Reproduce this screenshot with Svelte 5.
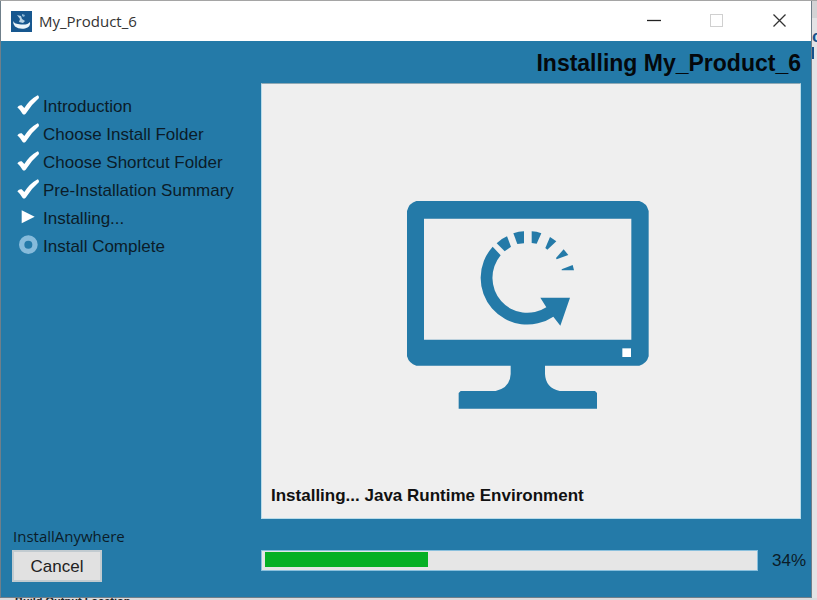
<script>
	export let product = 'My_Product_6';
	export let progress = 34;
	export let task = 'Java Runtime Environment';

	const steps = [
		{ label: 'Introduction', state: 'done' },
		{ label: 'Choose Install Folder', state: 'done' },
		{ label: 'Choose Shortcut Folder', state: 'done' },
		{ label: 'Pre-Installation Summary', state: 'done' },
		{ label: 'Installing...', state: 'current' },
		{ label: 'Install Complete', state: 'pending' }
	];
</script>

<div class="desktop">
	<div class="behind-top"></div>
	<div class="installer">
		<header class="titlebar">
			<svg class="app-icon" viewBox="0 0 21 21" aria-hidden="true">
				<rect width="21" height="21" fill="#17578f" />
				<path d="M2 10Q3 13 10 13.500Q17 14 19 11Q20 16 14 17.500Q8 18.500 4 15.500Q2 13 2 10z" fill="#eaf4fa" />
				<path d="M6 4L10 5L11 8L14 10L12 12L8 11L9 8z" fill="#b9d4e6" />
				<path d="M11 3L14 4L13 6L11 5z" fill="#8db6d3" />
			</svg>
			<span class="window-title">{product}</span>
			<div class="window-buttons">
				<button aria-label="Minimize">
					<svg viewBox="0 0 14 14"><path d="M0 6.500h14" stroke="#222" stroke-width="1.300" /></svg>
				</button>
				<button aria-label="Maximize" disabled>
					<svg viewBox="0 0 14 14"><rect x="0.500" y="0.500" width="12" height="12" fill="none" stroke="#d0d0d0" /></svg>
				</button>
				<button aria-label="Close">
					<svg viewBox="0 0 14 14"><path d="M0.500 0.500l12 12M12.500 0.500l-12 12" stroke="#333" stroke-width="1.300" /></svg>
				</button>
			</div>
		</header>

		<main class="body">
			<h1>Installing {product}</h1>

			<ol class="steps">
				{#each steps as step}
					<li>
						<svg viewBox="0 0 66 60" aria-hidden="true">
							{#if step.state === 'done'}
								<path d="M1 37Q7 29 14 31L22 39Q38 14 62 1Q66 2 66 9Q43 29 26 56Q21 61 17 57Q11 46 1 37z" fill="#fff" />
							{:else if step.state === 'current'}
								<path d="M14 10L53 29L14 49z" fill="#fff" />
							{:else}
								<circle cx="34" cy="29" r="20" fill="none" stroke="#86bbdb" stroke-width="16" />
							{/if}
						</svg>
						<span>{step.label}</span>
					</li>
				{/each}
			</ol>

			<section class="panel">
				<svg class="monitor" viewBox="52 33 726 624" aria-hidden="true">
					<path
						fill-rule="evenodd"
						d="M80 33H749Q771 39 777 63V499Q771 521 749 527H466V552Q468 594 510 603H616L622 609V656H207V609L213 603H318Q361 594 363 552V527H80Q58 521 52 499V63Q58 39 80 33zM103 86V449H725V86z"
					/>
					<path d="M698 475h26v26h-26z" fill="#fff" />
					<path d="M309 170A140 140 0 0 0 491 380L512 407L541 323H452L470 352A105 105 0 0 1 333 196z" />
					<path d="M321 160Q335 146 352 139L364 170L345 184z" />
					<path d="M371 130Q387 124 403 124V160L383 162z" />
					<path d="M426 124Q441 124 455 130L441 161L426 159z" />
					<path d="M481 141L500 154L473 179L467 174z" />
					<path d="M522 178L536 195L501 208L499 204z" />
					<path d="M549 225L553 241H516V238z" />
				</svg>
				<p class="status">Installing... {task}</p>
			</section>

			<footer class="actions">
				<span class="brand">InstallAnywhere</span>
				<button class="cancel">Cancel</button>
			</footer>

			<div class="progress">
				<div
					class="track"
					role="progressbar"
					aria-label="Installation progress"
					aria-valuenow={progress}
					aria-valuemin="0"
					aria-valuemax="100"
				>
					<div class="fill" style="width: {progress}%"></div>
				</div>
				<span class="percent">{progress}%</span>
			</div>
		</main>
	</div>
	<div class="behind-right">
		<span>c</span>
	</div>
	<div class="behind-bottom">
		<span>Build Output Location</span>
	</div>
</div>

<style>
	:global(body) {
		margin: 0;
	}

	.desktop {
		display: grid;
		grid-template-columns: 1fr 5px;
		grid-template-rows: 1px 1fr 2px;
		min-height: 100vh;
		background: #dcdbdd;
		font-family: 'Liberation Sans', Arial, sans-serif;
		font-size: 17px;
		color: #0b1c28;
	}

	.behind-top {
		grid-column: 1 / -1;
		background: #a5a5a5;
	}

	.installer {
		box-sizing: border-box;
		display: flex;
		flex-direction: column;
		border: 1px solid #6f7f8a;
		border-top: none;
		background: #247aa8;
	}

	.titlebar {
		display: flex;
		align-items: center;
		height: 40px;
		padding-left: 10px;
		background: #fff;
	}

	.app-icon {
		width: 21px;
		height: 21px;
		margin-right: 7px;
	}

	.window-title {
		font-family: 'Open Sans', 'Noto Sans', sans-serif;
		font-size: 15px;
		color: #333;
	}

	.window-buttons {
		display: flex;
		margin-left: auto;
	}

	.window-buttons button {
		display: flex;
		align-items: center;
		justify-content: center;
		width: 63px;
		height: 38px;
		padding: 0;
		border: none;
		background: none;
	}

	.window-buttons svg {
		width: 14px;
		height: 14px;
	}

	.body {
		flex: 1;
		display: grid;
		grid-template-columns: 244px 1fr;
		grid-template-rows: 42px 1fr 78px;
		column-gap: 4px;
		padding: 0 10px 0 12px;
	}

	h1 {
		grid-column: 1 / -1;
		margin: 0;
		font-size: 23px;
		line-height: 44px;
		text-align: right;
		color: #04080c;
	}

	.steps {
		margin: 0;
		padding: 10px 0 0 4px;
		list-style: none;
	}

	.steps li {
		display: flex;
		align-items: center;
		gap: 4px;
		height: 28px;
		white-space: nowrap;
	}

	.steps svg {
		width: 22px;
		height: 20px;
		margin-bottom: 4px;
	}

	.panel {
		display: flex;
		flex-direction: column;
		align-items: center;
		justify-content: space-between;
		padding: 117px 15px 12px 9px;
		border: 1px solid #b9dcea;
		border-top-color: #8fa9b5;
		background: #efefef;
	}

	.monitor {
		width: 242px;
		height: 208px;
		fill: #247aa8;
	}

	.status {
		align-self: flex-start;
		margin: 0;
		font-weight: bold;
		line-height: 20px;
		color: #111;
	}

	.actions {
		display: flex;
		flex-direction: column;
		align-items: flex-start;
		gap: 4px;
		padding-top: 7px;
	}

	.brand {
		font-family: 'Open Sans', 'Noto Sans', sans-serif;
		font-size: 15px;
		line-height: 20px;
	}

	.cancel {
		width: 90px;
		height: 32px;
		margin-left: -1px;
		padding: 2px 0 0;
		border: 2px solid #c2cbd0;
		background: #e1e1e1;
		font: inherit;
		color: #222;
	}

	.progress {
		display: flex;
		align-items: center;
		align-self: start;
		gap: 14px;
		margin-right: -5px;
		padding-top: 29px;
	}

	.track {
		box-sizing: border-box;
		flex: 1;
		height: 21px;
		padding: 1px 14px 3px 3px;
		border: 1px solid #8ac0dd;
		background: #e6e6e6;
	}

	.fill {
		height: 100%;
		background: #06b025;
	}

	.percent {
		padding-top: 2px;
		line-height: 22px;
	}

	.behind-right {
		overflow: hidden;
		padding-top: 26px;
		background: linear-gradient(#d4d3d5 17px, #e4e3e5 17px);
		font-size: 17px;
		font-weight: bold;
		color: #17528c;
	}

	.behind-right::after {
		content: '';
		display: block;
		width: 2px;
		height: 12px;
		margin-bottom: 28px;
		background: #17528c;
	}

	.behind-bottom {
		grid-column: 1 / -1;
		overflow: hidden;
		height: 2px;
		padding-left: 15px;
		font-size: 11px;
		font-weight: bold;
		line-height: 7px;
		color: #222;
	}
</style>
